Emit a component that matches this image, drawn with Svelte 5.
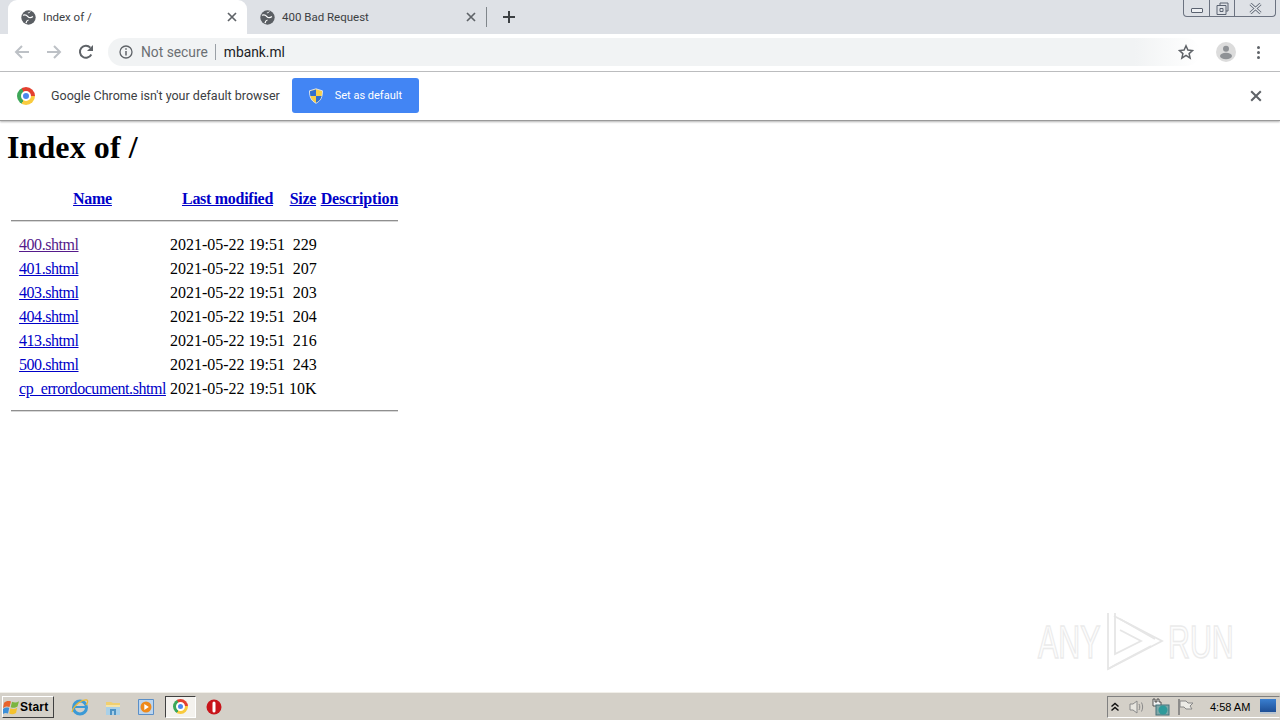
<script>
	const files = [
		{ name: '400.shtml', size: '229', visited: true },
		{ name: '401.shtml', size: '207' },
		{ name: '403.shtml', size: '203' },
		{ name: '404.shtml', size: '204' },
		{ name: '413.shtml', size: '216' },
		{ name: '500.shtml', size: '243' },
		{ name: 'cp_errordocument.shtml', size: '10K' }
	];
	const date = '2021-05-22 19:51';
</script>

{#snippet globe()}
	<svg class="globe" viewBox="0 0 24 24" width="15" height="15">
		<circle cx="12" cy="12" r="11.500" fill="#5a5e63" />
		<path d="M3 8.500c3-1.500 6-.5 8 2 2 2.500 5 2.500 8 0M8 21c.5-3 2-4.500 4-5" fill="none" stroke="#fff" stroke-width="2" />
		<path d="M15 2.500c-1 1.500-2.500 2-4 2" fill="none" stroke="#fff" stroke-width="1.600" />
	</svg>
{/snippet}

{#snippet close(color, size)}
	<svg viewBox="0 0 10 10" width={size} height={size}>
		<path d="M1 1l8 8M9 1l-8 8" stroke={color} stroke-width="1.700" fill="none" />
	</svg>
{/snippet}

<div class="screen">
	<header class="tabstrip">
		<div class="tab active">
			{@render globe()}
			<span class="tab-title">Index of /</span>
			{@render close('#5f6368', 10)}
		</div>
		<div class="tab">
			{@render globe()}
			<span class="tab-title">400 Bad Request</span>
			{@render close('#5f6368', 10)}
		</div>
		<span class="tab-sep"></span>
		<svg class="plus" viewBox="0 0 12 12" width="12" height="12">
			<path d="M6 0v12M0 6h12" stroke="#3c4043" stroke-width="2" />
		</svg>
		<div class="winctl">
			<span class="ctl min"><i></i></span>
			<span class="ctl restore">
				<svg viewBox="0 0 13 13" width="13" height="13">
					<path d="M4 3V1h8v8h-2M1 3.500h9v9H1zM4 6.500h3v3H4z" fill="none" stroke="#5a6270" />
				</svg>
			</span>
			<span class="ctl exit">
				<svg viewBox="0 0 13 11" width="13" height="11">
					<path d="M1.500 1l10 9M11.500 1l-10 9" stroke="#5a6270" stroke-width="3" />
					<path d="M1.500 1l10 9M11.500 1l-10 9" stroke="#e8ebef" stroke-width="1.400" />
				</svg>
			</span>
		</div>
	</header>

	<div class="toolbar">
		<svg class="nav" viewBox="0 0 16 16" width="16" height="16">
			<path d="M15 8H2M8 2L2 8l6 6" fill="none" stroke="#bdc1c6" stroke-width="2" />
		</svg>
		<svg class="nav" viewBox="0 0 16 16" width="16" height="16">
			<path d="M1 8h13M8 2l6 6-6 6" fill="none" stroke="#bdc1c6" stroke-width="2" />
		</svg>
		<svg class="nav" viewBox="0 0 16 16" width="16" height="16">
			<path d="M13.300 10.500A6 6 0 1 1 12.300 3.600" fill="none" stroke="#5f6368" stroke-width="2" />
			<path d="M15 1v6H9z" fill="#5f6368" />
		</svg>
		<div class="omnibox">
			<svg viewBox="0 0 14 14" width="14" height="14">
				<circle cx="7" cy="7" r="6" fill="none" stroke="#5f6368" stroke-width="1.300" />
				<path d="M7 6v4.500M7 3.300v1.500" stroke="#5f6368" stroke-width="1.500" />
			</svg>
			<span class="not-secure">Not secure</span>
			<span class="omni-sep"></span>
			<span class="url">mbank.ml</span>
			<svg class="star" viewBox="0 0 16 16" width="16" height="16">
				<path d="M8 1.800l1.900 4.200 4.600.5-3.400 3.100 1 4.500L8 11.300l-4.100 2.800 1-4.500L1.500 6.500 6.100 6z" fill="none" stroke="#5f6368" stroke-width="1.500" />
			</svg>
		</div>
		<span class="avatar">
			<svg viewBox="0 0 20 20" width="20" height="20">
				<circle cx="10" cy="6.800" r="3" fill="#8f9296" />
				<ellipse cx="10" cy="14" rx="6" ry="3.200" fill="#8f9296" />
			</svg>
		</span>
		<span class="dots"><i></i><i></i><i></i></span>
	</div>

	<div class="infobar">
		<span class="chrome-logo"><i></i></span>
		<span class="info-text">Google Chrome isn't your default browser</span>
		<div class="default-btn">
			<svg viewBox="0 0 16 16" width="16" height="16">
				<path d="M8 .8l6.500 2c0 6.500-1.800 10-6.500 12.500C3.300 12.800 1.500 9.300 1.500 2.800z" fill="#f6cf4a" stroke="#e8eefc" stroke-width=".8" />
				<path d="M8 1.500V8H2.400C2.100 6.500 2 4.800 2 3.200zM8 8h5.600c-.6 3-2.400 5.200-5.600 6.800z" fill="#2f6fd0" />
			</svg>
			<span>Set as default</span>
		</div>
		<span class="info-close">{@render close('#5f6368', 12)}</span>
	</div>

	<main class="page">
		<h1>Index of /</h1>
		<table>
			<thead>
				<tr>
					<th class="icon-col"></th>
					<th><a href="#name">Name</a></th>
					<th><a href="#modified">Last modified</a></th>
					<th><a href="#size">Size</a></th>
					<th><a href="#description">Description</a></th>
				</tr>
				<tr><th colspan="5"><hr /></th></tr>
			</thead>
			<tbody>
				{#each files as file}
					<tr>
						<td class="icon-col"></td>
						<td><a class:visited={file.visited} href="#file">{file.name}</a></td>
						<td>{date}</td>
						<td class="size">{file.size}</td>
						<td></td>
					</tr>
				{/each}
				<tr><th colspan="5"><hr /></th></tr>
			</tbody>
		</table>

		<div class="watermark">
			<span>ANY</span>
			<svg viewBox="0 0 60 64" width="60" height="64">
				<g fill="none" stroke="#e6e6e6" stroke-width="1.800" transform="translate(-5 0)">
					<path d="M8 3v56l54-28L14 6" />
					<path d="M15 3v41l26-13L20 20" />
					<path d="M20 9l35 20M8 59l7-4 36-19" />
				</g>
			</svg>
			<span>RUN</span>
		</div>
	</main>

	<footer class="taskbar">
		<div class="start">
			<svg viewBox="0 0 17 16" width="17" height="16">
				<path d="M1 4c2-2 4-2.500 7-1.500L6.500 8C4 7 2 7.500 0 9z" fill="#e8632c" />
				<path d="M9 2.800c2.500 1 4.500 1 7-.5L14.500 7.500C12 9 10 9 7.700 8.200z" fill="#7bb53f" />
				<path d="M0 10c2-1.500 4-1.800 6.200-1L5 14.500C3 13.500 1.500 14 0 15z" fill="#3d8fd8" />
				<path d="M7.400 9.300c2.300 1 4.300 1 6.800-.5L13 14c-2.500 1.500-4.500 1.500-6.800.6z" fill="#f4c22e" />
			</svg>
			<b>Start</b>
		</div>
		<div class="launch">
			<svg viewBox="0 0 18 18" width="18" height="18">
				<ellipse cx="9" cy="9.500" rx="6.500" ry="6.500" fill="none" stroke="#3c9ad6" stroke-width="3" />
				<path d="M4 9h10" stroke="#3c9ad6" stroke-width="2" />
				<path d="M1 14C3 7 11 1 16 2c1.500 1 .5 3-1 5" fill="none" stroke="#e8b838" stroke-width="1.300" />
			</svg>
			<svg viewBox="0 0 18 18" width="18" height="18">
				<path d="M2 8V4h5l2 1h7v3z" fill="#f0cf70" />
				<path d="M2 7h14v10H2z" fill="#a9d0e8" />
				<path d="M6 17v-6h6v6h-2v-4H8v4z" fill="#4d93c4" />
				<path d="M2 7h14v2H2z" fill="#f5e4a8" />
			</svg>
			<svg viewBox="0 0 18 18" width="18" height="18">
				<path d="M1.500 1.500h15v15h-15z" fill="#bcd5ee" stroke="#5a8fc8" />
				<circle cx="9" cy="9" r="5.500" fill="#ee8a1c" />
				<path d="M7.300 6l4.500 3-4.500 3z" fill="#fff" />
			</svg>
			<div class="task-active"><span class="chrome-logo small"><i></i></span></div>
			<svg viewBox="0 0 18 18" width="18" height="18">
				<circle cx="9" cy="9" r="7.500" fill="#c8141a" />
				<rect x="7.500" y="3.500" width="3" height="11" rx="1.500" fill="#fff" />
			</svg>
		</div>
		<div class="tray">
			<svg viewBox="0 0 10 10" width="10" height="10">
				<path d="M1.500 4.500L5 1.500l3.500 3M1.500 8.500L5 5.500l3.500 3" fill="none" stroke="#111" stroke-width="1.500" />
			</svg>
			<svg viewBox="0 0 18 16" width="18" height="16">
				<path d="M2 5h3l4-3v12l-4-3H2z" fill="#e8e6e0" stroke="#8a8a8a" />
				<path d="M11 5c1 2 1 4 0 6M13.500 3.500c1.500 3 1.500 6 0 9" fill="none" stroke="#8a8a8a" />
			</svg>
			<svg viewBox="0 0 18 18" width="18" height="18">
				<path d="M1 1h2v3h2V1h2v3h2v4H1z" fill="#f2f2f2" stroke="#333" stroke-width=".8" />
				<rect x="4" y="7" width="13" height="10" fill="#7fa8a8" stroke="#44707a" />
				<circle cx="11" cy="12" r="4.500" fill="#2e9a9a" />
			</svg>
			<svg viewBox="0 0 18 18" width="18" height="18">
				<path d="M3 1v16" stroke="#777" stroke-width="1.500" />
				<path d="M4 3h6l2 2h5l-3 3 2 3h-6l-2-2H4z" fill="#ecebe6" stroke="#888" />
			</svg>
			<span class="clock">4:58 AM</span>
			<span class="show-desktop"></span>
		</div>
	</footer>
</div>

<style>
	:global(body) {
		background: #fff;
	}

	.screen {
		position: relative;
		display: flex;
		flex-direction: column;
		width: 1280px;
		height: 720px;
		overflow: hidden;
		font-family: Roboto, 'Liberation Sans', sans-serif;
	}

	/* tab strip */
	.tabstrip {
		display: flex;
		align-items: center;
		flex: none;
		height: 34px;
		padding-left: 8px;
		background: #dee1e6;
	}

	.tab {
		display: flex;
		align-items: center;
		align-self: stretch;
		width: 239px;
		padding: 0 10px 0 13px;
		box-sizing: border-box;
		color: #3c4043;
	}

	.tab.active {
		background: #fff;
		border-radius: 9px 9px 0 0;
	}

	.tab-title {
		flex: 1;
		margin-left: 7px;
		font-size: 11.500px;
		white-space: nowrap;
	}

	.tab-sep {
		width: 1px;
		height: 20px;
		background: #80868b;
	}

	.plus {
		margin-left: 16px;
	}

	.winctl {
		display: flex;
		align-self: flex-start;
		height: 16px;
		margin-left: auto;
		margin-right: 4px;
		border: 1px solid #6b7280;
		border-top: 0;
		border-radius: 0 0 4px 4px;
	}

	.ctl {
		display: flex;
		align-items: center;
		justify-content: center;
		height: 16px;
		box-sizing: border-box;
	}

	.ctl + .ctl {
		border-left: 1px solid #6b7280;
	}

	.min {
		width: 25px;
	}

	.min i {
		display: block;
		width: 10px;
		height: 3px;
		margin-top: 5px;
		border: 1px solid #5a6270;
		border-radius: 1px;
		background: #eef0f3;
	}

	.restore {
		width: 25px;
	}

	.exit {
		width: 41px;
	}

	/* toolbar */
	.toolbar {
		display: flex;
		align-items: center;
		flex: none;
		height: 36px;
		padding: 0 0 1px 14px;
		background: #fff;
		border-bottom: 1px solid #bfc0c2;
	}

	.nav {
		margin-right: 16px;
	}

	.nav:nth-child(3) {
		margin-right: 14px;
	}

	.omnibox {
		display: flex;
		align-items: center;
		width: 1092px;
		height: 28px;
		padding: 0 6px 0 11px;
		box-sizing: border-box;
		border-radius: 14px;
		background: linear-gradient(to right, #f1f3f4 94%, #fff);
		font-size: 13.800px;
	}

	.not-secure {
		margin-left: 8px;
		color: #6b6f73;
	}

	.omni-sep {
		width: 1px;
		height: 16px;
		margin: 0 8px 0 7px;
		background: #9aa0a6;
	}

	.url {
		color: #202124;
	}

	.star {
		margin-left: auto;
	}

	.avatar {
		display: flex;
		width: 20px;
		height: 20px;
		margin-left: 16px;
		border-radius: 50%;
		background: #dcdcdc;
	}

	.dots {
		display: flex;
		flex-direction: column;
		gap: 2px;
		margin-left: 21px;
	}

	.dots i {
		display: block;
		width: 3px;
		height: 3px;
		border-radius: 50%;
		background: #5f6368;
	}

	/* default browser bar */
	.infobar {
		display: flex;
		align-items: center;
		flex: none;
		height: 49px;
		padding: 0 18px 1px 17px;
		box-sizing: border-box;
		background: #fff;
		border-bottom: 1px solid #9a9a9a;
		box-shadow: 0 1px 2px rgba(0, 0, 0, 0.3);
		z-index: 1;
	}

	.chrome-logo {
		display: flex;
		align-items: center;
		justify-content: center;
		flex: none;
		width: 18px;
		height: 18px;
		border-radius: 50%;
		background: conic-gradient(#e3402f 0 90deg, #f9cb3e 90deg 210deg, #3da758 210deg 330deg, #e3402f 330deg);
	}

	.chrome-logo i {
		display: block;
		width: 6px;
		height: 6px;
		border: 2px solid #fff;
		border-radius: 50%;
		background: #4a88ee;
	}

	.chrome-logo.small {
		width: 15px;
		height: 15px;
	}

	.chrome-logo.small i {
		width: 5px;
		height: 5px;
	}

	.info-text {
		margin-left: 16px;
		font-size: 12.500px;
		color: #3c4043;
		white-space: nowrap;
	}

	.default-btn {
		display: flex;
		align-items: center;
		width: 127px;
		height: 35px;
		margin-left: 12px;
		padding-left: 16px;
		box-sizing: border-box;
		border-radius: 3px;
		background: #4285f4;
		color: #fff;
		font-size: 11px;
	}

	.default-btn span {
		margin: -1px 0 0 11px;
	}

	.info-close {
		display: flex;
		margin-left: auto;
	}

	/* directory listing */
	.page {
		position: relative;
		flex: 1;
		padding: 8px;
		font-family: 'Liberation Serif', serif;
		font-size: 16px;
		color: #000;
		background: #fff;
	}

	h1 {
		margin: 0 0 21px -1px;
		font-size: 32px;
		line-height: 37px;
		letter-spacing: 0.1px;
	}

	table {
		border-spacing: 2px;
	}

	th,
	td {
		padding: 1px;
	}

	td {
		height: 20px;
		vertical-align: bottom;
	}

	th a {
		letter-spacing: -0.28px;
	}

	th:last-child a {
		letter-spacing: -0.14px;
	}

	td a {
		letter-spacing: -0.45px;
	}

	.icon-col {
		width: 4px;
	}

	.size {
		text-align: right;
	}

	a {
		color: #0000c8;
	}

	a.visited {
		color: #551a8b;
	}

	hr {
		height: 0;
		margin: 8px 0;
		border: 0;
		border-top: 1px solid #8f8f8f;
		border-bottom: 1px solid #d8d8d8;
	}

	.watermark {
		position: absolute;
		right: 48px;
		bottom: 18px;
		display: flex;
		align-items: center;
		gap: 3px;
		font-family: 'Liberation Sans', sans-serif;
		font-size: 46px;
		color: #fdfdfd;
		-webkit-text-stroke: 1.500px #ebebeb;
	}

	.watermark span {
		display: inline-block;
		width: 64px;
		transform: scaleX(0.66);
		transform-origin: left;
		white-space: nowrap;
	}

	/* windows taskbar */
	.taskbar {
		display: flex;
		align-items: center;
		flex: none;
		height: 28px;
		box-sizing: border-box;
		background: #d4d0c8;
		border-top: 1px solid #f1efe9;
	}

	.start {
		display: flex;
		align-items: center;
		width: 52px;
		height: 22px;
		margin-left: 2px;
		box-sizing: border-box;
		border: 1px solid;
		border-color: #fff #404040 #404040 #fff;
		font-family: 'Liberation Sans', sans-serif;
		font-size: 12px;
		letter-spacing: 0.2px;
	}

	.launch {
		display: flex;
		align-items: center;
		gap: 15px;
		margin-left: 17px;
	}

	.task-active {
		display: flex;
		align-items: center;
		justify-content: center;
		width: 31px;
		height: 22px;
		margin: 0 -6px 0 -5px;
		box-sizing: border-box;
		border: 1px solid;
		border-color: #404040 #fff #fff #404040;
		background: #f4f2ee;
	}

	.tray {
		display: flex;
		align-items: center;
		gap: 6px;
		height: 22px;
		margin-left: auto;
		padding-left: 2px;
		box-sizing: border-box;
		width: 173px;
		border: 1px solid;
		border-color: #808080 #d4d0c8 #fff #808080;
	}

	.tray svg:nth-child(2) {
		margin-left: 2px;
	}

	.clock {
		margin-left: 10px;
		font-family: 'Liberation Sans', sans-serif;
		font-size: 11px;
		white-space: nowrap;
	}

	.show-desktop {
		width: 16px;
		height: 13px;
		margin-left: 4px;
		background: linear-gradient(#3a7fd0, #1e4f96);
		border-bottom: 2px solid #b8c4d0;
	}
</style>
